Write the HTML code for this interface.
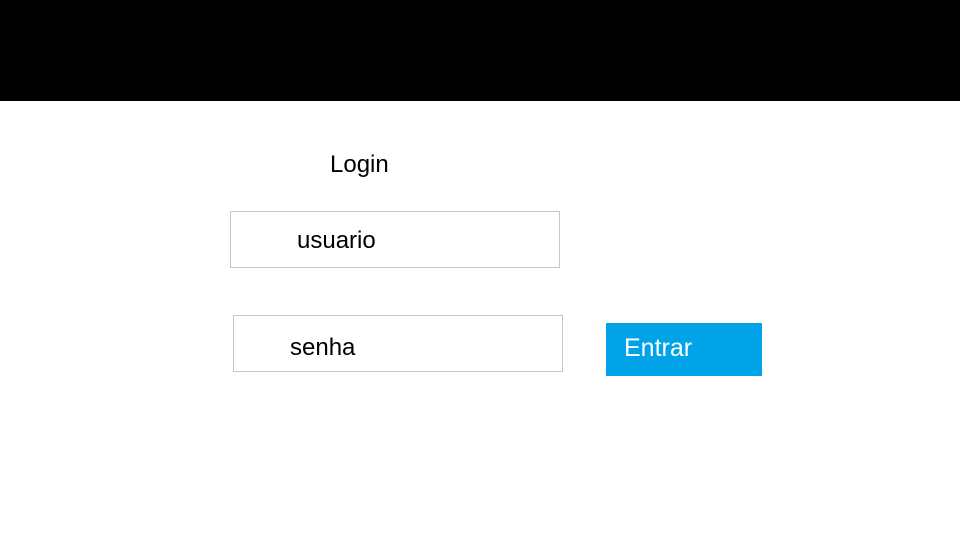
<!DOCTYPE html>
<html><head><meta charset="utf-8"><style>
html,body{margin:0;padding:0;width:960px;height:540px;background:#fff;overflow:hidden;font-family:"Liberation Sans",sans-serif;}
.bar{position:absolute;left:0;top:0;width:960px;height:101px;background:#000;}
.t{position:absolute;font-size:24px;color:#000;line-height:1;white-space:nowrap;}
.box{position:absolute;border:1px solid #c6c6c6;box-sizing:border-box;}
.btn{position:absolute;left:606px;top:323px;width:156px;height:53px;background:#00a3e8;}
</style></head><body>
<div class="bar"></div>
<div class="t" style="left:330px;top:153px;">Login</div>
<div class="box" style="left:230px;top:211px;width:330px;height:57px;"></div>
<div class="t" style="left:297px;top:229px;">usuario</div>
<div class="box" style="left:233px;top:315px;width:330px;height:57px;"></div>
<div class="t" style="left:290px;top:336px;">senha</div>
<div class="btn"></div>
<div class="t" style="left:624px;top:336px;color:#fff;font-size:25px;">Entrar</div>
</body></html>
